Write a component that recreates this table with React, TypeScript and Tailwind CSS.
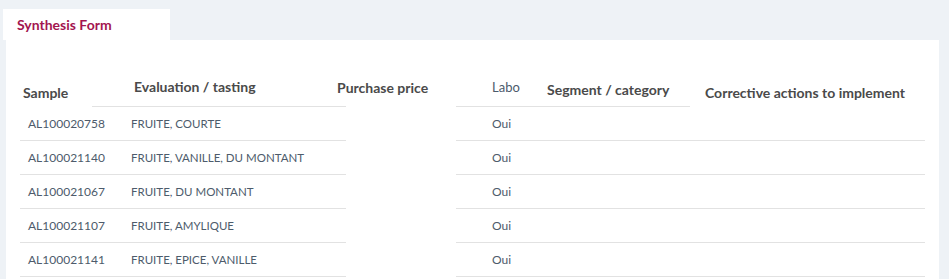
const rows = [
  { sample: "AL100020758", evaluation: "FRUITE, COURTE", labo: "Oui" },
  { sample: "AL100021140", evaluation: "FRUITE, VANILLE, DU MONTANT", labo: "Oui" },
  { sample: "AL100021067", evaluation: "FRUITE, DU MONTANT", labo: "Oui" },
  { sample: "AL100021107", evaluation: "FRUITE, AMYLIQUE", labo: "Oui" },
  { sample: "AL100021141", evaluation: "FRUITE, EPICE, VANILLE", labo: "Oui" },
];

const SynthesisTable = () => (
  <div className="pl-[14px]">
    {/* header row */}
    <div className="flex h-[67px] text-[14px] leading-[18px] font-bold text-[#4a4a4a]">
      <div className="flex w-[72px] items-end pb-[5px] pl-[3px]">Sample</div>
      <div className="flex w-[254px] items-end border-b border-[#e2e2e2] pb-[10px] pl-[42px]">
        Evaluation / tasting
      </div>
      <div className="flex w-[110px] items-end pb-[10px]">
        <span className="-ml-[9px]">Purchase price</span>
      </div>
      <div className="flex w-[234px] border-b border-[#e2e2e2]">
        <div className="flex w-[81px] items-end pb-[10px] pl-[36px] text-[13px] font-normal text-[#4b5a6c]">Labo</div>
        <div className="flex items-end pb-[7px] pl-[10px]">Segment / category</div>
      </div>
      <div className="flex items-end pb-[5px] pl-[15px]">Corrective actions to implement</div>
    </div>

    {rows.map((row) => (
      <div key={row.sample} className="flex h-[34px] text-[12px] text-[#4d5b6b]">
        <div className="flex w-[326px] items-center border-b border-[#e2e2e2]">
          <span className="w-[111px] pl-[8px]">{row.sample}</span>
          <span className="text-[11.5px]">{row.evaluation}</span>
        </div>
        <div className="w-[110px]" />
        <div className="flex w-[469px] items-center border-b border-[#e2e2e2] pl-[36px]">
          {row.labo}
        </div>
      </div>
    ))}
  </div>
);

const App = () => {
  return (
    <div
      className="h-[279px] overflow-hidden bg-[#eef2f6] pt-[9px] pl-[3px]"
      style={{ fontFamily: "Lato, 'Liberation Sans', sans-serif" }}
    >
      <div className="flex h-[31px] w-[167px] items-center bg-white pl-[14px] text-[14px] font-bold text-[#a3154f]">
        Synthesis Form
      </div>
      <div className="ml-[3px] h-[240px] w-[933px] bg-white">
        <SynthesisTable />
      </div>
    </div>
  );
};

export default App;
